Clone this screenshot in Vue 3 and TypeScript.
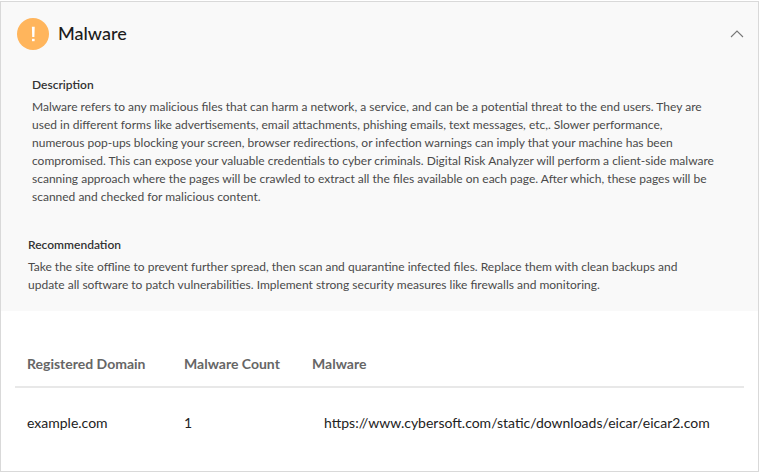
<script setup lang="ts">
import { ref } from 'vue'

interface Finding {
  domain: string
  count: number
  url: string
}

const open = ref(true)

const description =
  'Malware refers to any malicious files that can harm a network, a service, and can be a potential threat to the end users. They are used in different forms like advertisements, email attachments, phishing emails, text messages, etc,. Slower performance, numerous pop-ups blocking your screen, browser redirections, or infection warnings can imply that your machine has been compromised. This can expose your valuable credentials to cyber criminals. Digital Risk Analyzer will perform a client-side malware scanning approach where the pages will be crawled to extract all the files available on each page. After which, these pages will be scanned and checked for malicious content.'

const recommendation =
  'Take the site offline to prevent further spread, then scan and quarantine infected files. Replace them with clean backups and update all software to patch vulnerabilities. Implement strong security measures like firewalls and monitoring.'

const findings: Finding[] = [
  {
    domain: 'example.com',
    count: 1,
    url: 'https://www.cybersoft.com/static/downloads/eicar/eicar2.com',
  },
]
</script>

<template>
  <section class="card">
    <div class="summary">
      <header class="head">
        <svg class="badge" viewBox="0 0 32 32" aria-hidden="true">
          <circle cx="16" cy="16" r="16" fill="#ffb55c" />
          <path d="M14.9 8.8 H17.7 L17.4 19 H15.2 Z" fill="#fff" />
          <rect x="15" y="20.8" width="2.6" height="2.4" fill="#fff" />
        </svg>
        <h2 class="title">Malware</h2>
        <button
          class="toggle"
          type="button"
          aria-label="Toggle details"
          :aria-expanded="open"
          @click="open = !open"
        >
          <svg class="chevron" :class="{ closed: !open }" viewBox="0 0 14 8" aria-hidden="true">
            <path d="M1 7 L7 1 L13 7" fill="none" stroke="#777" stroke-width="1.1" />
          </svg>
        </button>
      </header>
      <template v-if="open">
        <div class="block description">
          <h3>Description</h3>
          <p>{{ description }}</p>
        </div>
        <div class="block recommendation">
          <h3>Recommendation</h3>
          <p>{{ recommendation }}</p>
        </div>
      </template>
    </div>
    <div v-if="open" class="results">
      <table>
        <thead>
          <tr>
            <th class="domain" scope="col">Registered Domain</th>
            <th class="count" scope="col">Malware Count</th>
            <th scope="col">Malware</th>
          </tr>
        </thead>
        <tbody>
          <tr v-for="item in findings" :key="item.url">
            <td>{{ item.domain }}</td>
            <td>{{ item.count }}</td>
            <td class="url">{{ item.url }}</td>
          </tr>
        </tbody>
      </table>
    </div>
  </section>
</template>

<style scoped>
.card {
  margin: 1px 1px 1px 0;
  border: 1px solid #d9d9d9;
  background: #fff;
  font-family: Lato, "Liberation Sans", sans-serif;
}

.summary {
  padding: 16px 14px 17px 16px;
  background: #f9f9f9;
}

.head {
  display: flex;
  align-items: center;
  gap: 9px;
}

.badge {
  width: 32px;
  height: 32px;
}

.title {
  flex: 1;
  margin: 0;
  padding-bottom: 2px;
  font-size: 18px;
  line-height: 24px;
  font-weight: 500;
  color: #1c1c1c;
}

.toggle {
  display: flex;
  padding: 0;
  border: 0;
  background: none;
  cursor: pointer;
}

.chevron {
  width: 14px;
  height: 8px;
}

.chevron.closed {
  transform: rotate(180deg);
}

.block {
  color: #4a4a4a;
  font-size: 12px;
  line-height: 18px;
}

.block h3 {
  margin: 0 0 4px;
  font-size: 12px;
  line-height: 18px;
  font-weight: 600;
  color: #333;
}

.block p {
  margin: 0;
}

.description {
  padding: 26px 28px 0 15px;
}

.recommendation {
  padding: 30px 28px 0 11px;
}

.results {
  padding: 33px 14px 28px;
}

table {
  width: 100%;
  border-collapse: collapse;
  font-size: 14px;
  line-height: 20px;
}

th,
td {
  padding: 0 12px;
  text-align: left;
}

th {
  padding-top: 10px;
  padding-bottom: 12px;
  border-bottom: 2px solid #e8e8e8;
  font-weight: 700;
  color: #666;
}

td {
  padding-top: 25px;
  padding-bottom: 10px;
  color: #222;
}

.domain {
  width: 133px;
}

.count {
  width: 104px;
}

.url {
  padding-left: 24px;
}
</style>
